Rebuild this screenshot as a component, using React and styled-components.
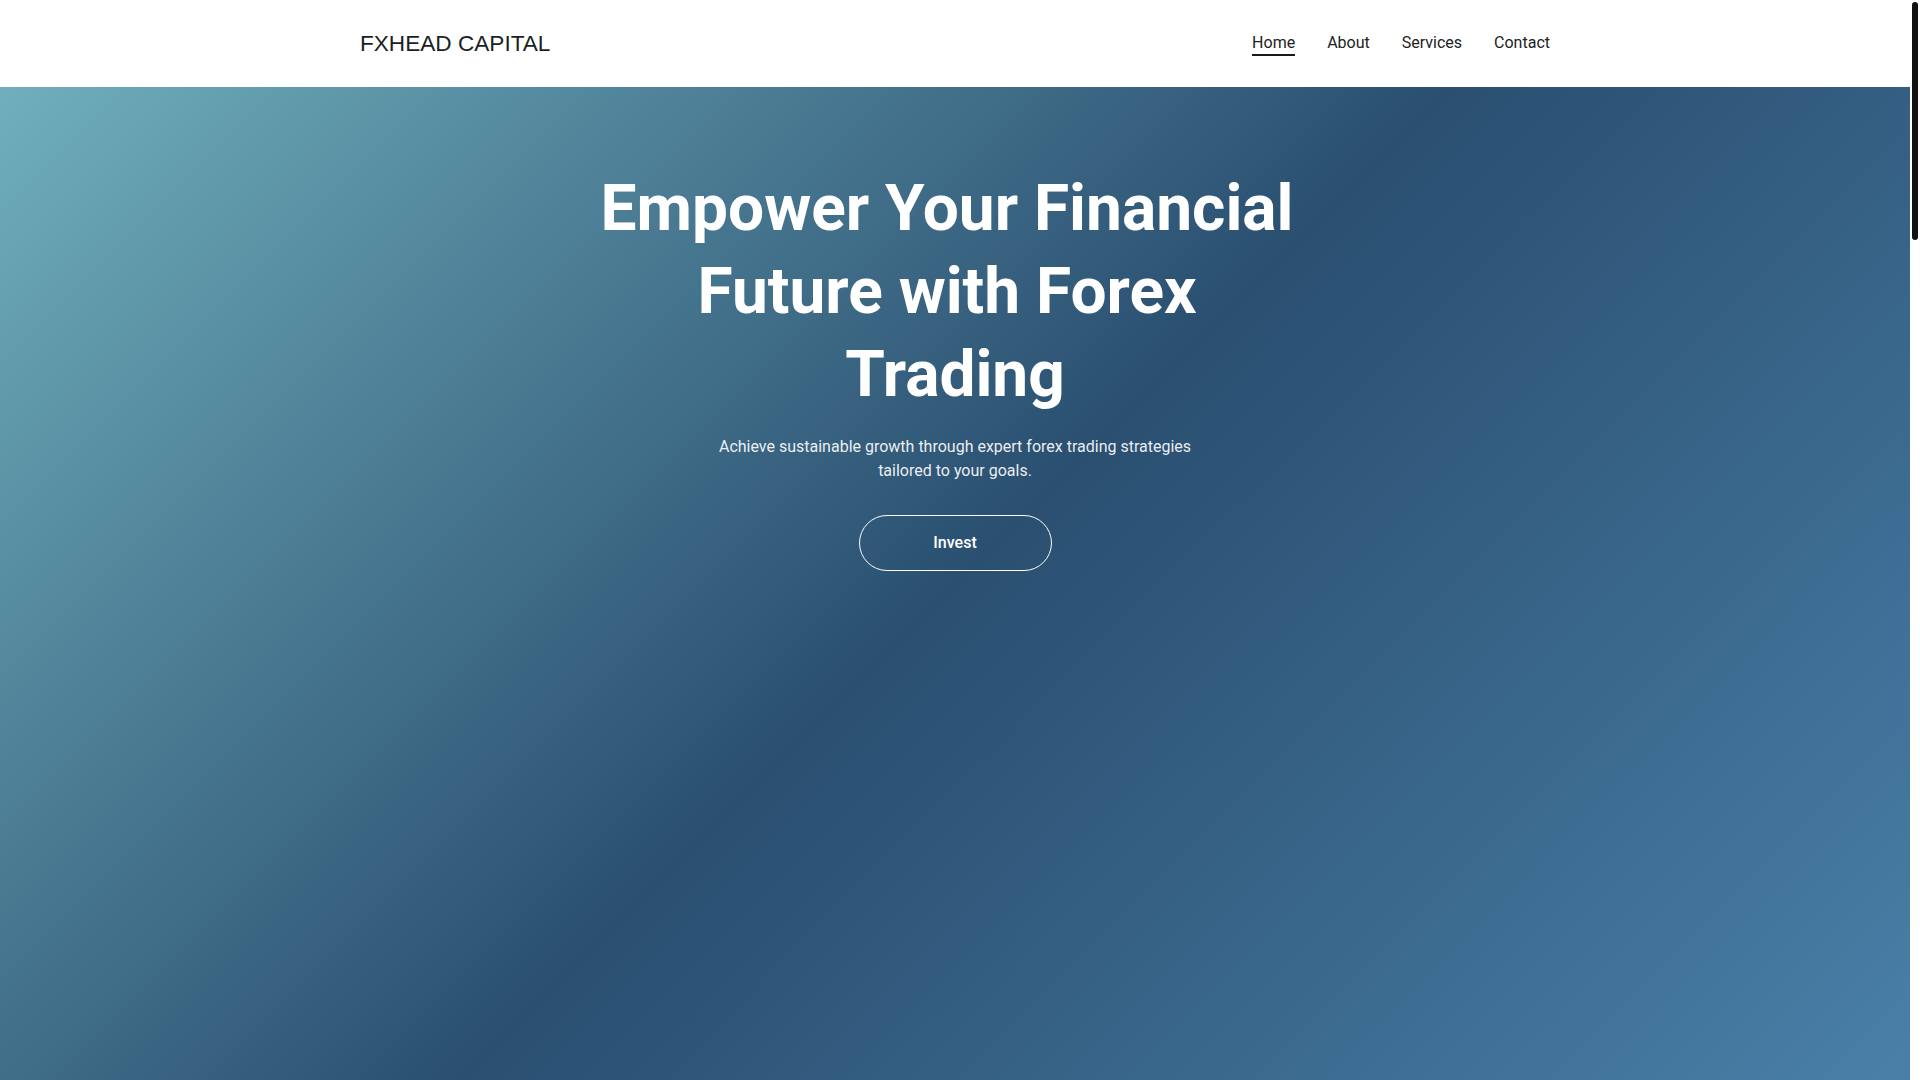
import React from 'react';
import styled, { createGlobalStyle } from 'styled-components';

const GlobalStyle = createGlobalStyle`
  * { box-sizing: border-box; }
  html, body { margin: 0; padding: 0; height: 100%; overflow: hidden; background: #fff; }
  body { font-family: Roboto, "Liberation Sans", Arial, sans-serif; }
`;

const Page = styled.div`
  display: flex;
  height: 100vh;
`;

const Main = styled.main`
  flex: 1;
  min-width: 0;
  overflow: hidden;
`;

// the page's slim scrollbar
const ScrollRail = styled.div`
  width: 10px;
  flex-shrink: 0;
  background: #fff;
  padding: 2px 2px 0;
`;

const ScrollThumb = styled.div`
  width: 6px;
  height: 238px;
  border-radius: 4px;
  background: #111;
`;

const Header = styled.header`
  height: 87px;
  background: #fff;
  display: flex;
  align-items: center;
`;

const Container = styled.div`
  width: 1190px;
  margin: 0 auto;
  display: flex;
  align-items: center;
  justify-content: space-between;
`;

const Logo = styled.div`
  font-family: "Liberation Sans", Arial, sans-serif;
  font-size: 22.6px;
  color: #1b1f24;
`;

const Nav = styled.nav`
  display: flex;
  gap: 32px;
`;

const NavLink = styled.a`
  font-size: 16px;
  line-height: 19px;
  color: #222;
  text-decoration: none;
  padding: 2px 0;
  border-bottom: 2px solid ${(p) => (p.$active ? '#1a1a1a' : 'transparent')};
  cursor: pointer;
`;

const Hero = styled.section`
  min-height: 993px;
  background: linear-gradient(135deg, #70afbb 0%, #2a4f71 50%, #4a80a8 100%);
  display: flex;
  flex-direction: column;
  align-items: center;
  padding-top: 80px;
  color: #fff;
  text-align: center;
`;

const Title = styled.h1`
  margin: 0 0 18px;
  max-width: 712px;
  font-size: 64px;
  font-weight: 700;
  line-height: 1.3;
  white-space: break-spaces;
`;

const Lead = styled.p`
  margin: 0 0 32px;
  max-width: 500px;
  font-size: 16px;
  line-height: 24px;
  color: rgba(255, 255, 255, 0.92);
`;

const Button = styled.button`
  font-family: Roboto, sans-serif;
  font-size: 16px;
  font-weight: 500;
  color: #fff;
  background: transparent;
  border: 1.5px solid #fff;
  border-radius: 999px;
  width: 193px;
  height: 56px;
  cursor: pointer;
`;

export default function App() {
  return (
    <Page>
      <GlobalStyle />
      <Main>
        <Header>
          <Container>
            <Logo>FXHEAD CAPITAL</Logo>
            <Nav>
              <NavLink $active>Home</NavLink>
              <NavLink>About</NavLink>
              <NavLink>Services</NavLink>
              <NavLink>Contact</NavLink>
            </Nav>
          </Container>
        </Header>
        <Hero>
          <Title>Empower Your Financial Future with Forex Trading</Title>
          <Lead>Achieve sustainable growth through expert forex trading strategies tailored to your goals.</Lead>
          <Button>Invest</Button>
        </Hero>
      </Main>
      <ScrollRail>
        <ScrollThumb />
      </ScrollRail>
    </Page>
  );
}
